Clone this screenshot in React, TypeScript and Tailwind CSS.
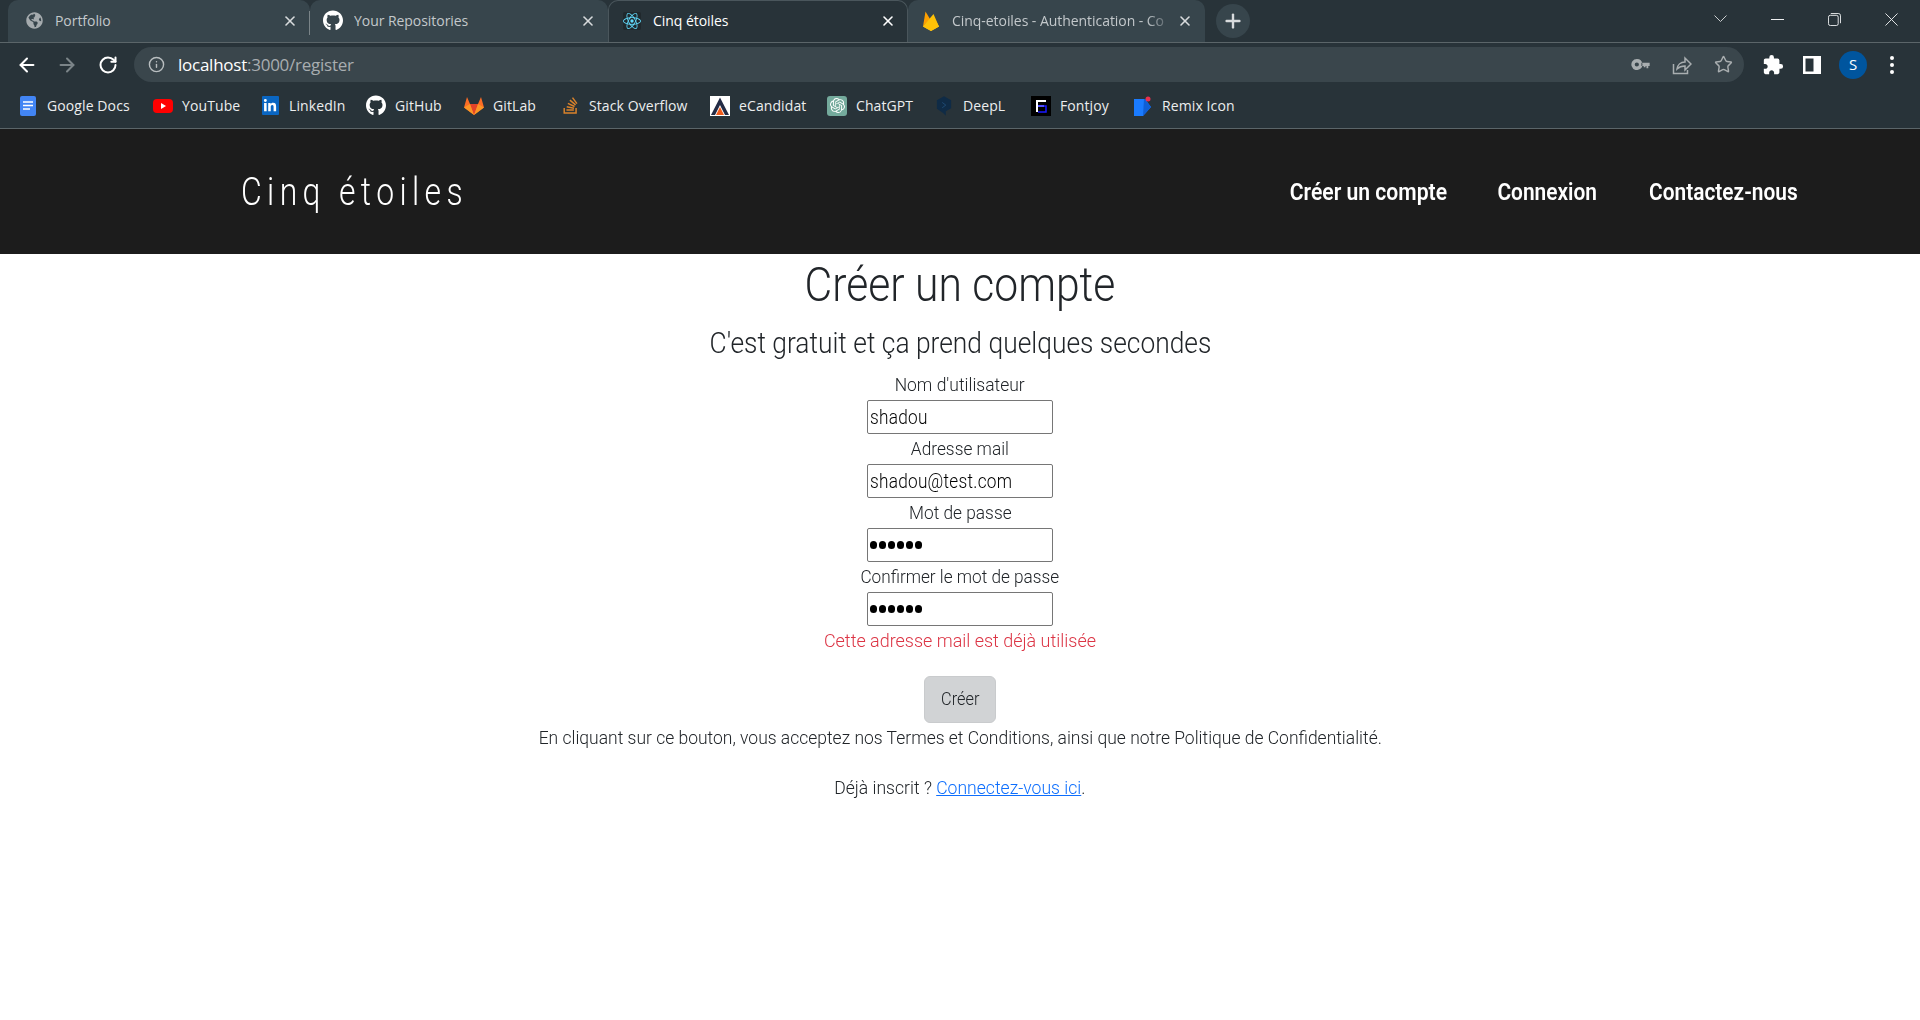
import React from "react";
import { ArrowLeft, ArrowRight, RotateCw, Info, Star, Plus, X } from "lucide-react";
import { FaGithub, FaStackOverflow, FaLinkedinIn, FaGlobeAmericas } from "react-icons/fa";
import { MdExtension } from "react-icons/md";
import { SiReact, SiOpenai } from "react-icons/si";

const Tab = ({ icon, title, active, width, divider, pad, fade }: { icon: React.ReactNode; title: string; active?: boolean; width: string; divider?: boolean; pad: string; fade?: boolean }) => (
  <div className={`${width} ${pad} relative h-[42px] shrink-0 flex items-center pb-[2px] pr-[11px] rounded-t-[10px] border-x border-t ${active ? "bg-[#283339] border-[#4a565c]" : "bg-[#37454c] border-transparent"}`}>
    <span className="w-[20px] h-[20px] shrink-0 flex items-center justify-center">{icon}</span>
    <span className={`ml-[11px] flex-1 overflow-hidden whitespace-nowrap text-[14px] tracking-[-0.05px] ${fade ? "[mask-image:linear-gradient(to_right,black_88%,transparent)]" : ""} ${active ? "text-white" : "text-[#c3c8cb]"}`}>{title}</span>
    <X size={16} strokeWidth={2.4} className={`shrink-0 ml-1 ${active ? "text-white" : "text-[#d8dbdd]"}`} />
    {divider && <span className="absolute right-[-1px] top-[10px] h-[24px] w-px bg-[#7a8488]" />}
  </div>
);

const Bookmark = ({ icon, label, width }: { icon: React.ReactNode; label: string; width: string }) => (
  <div className={`${width} shrink-0 flex items-center`}>
    <span className="w-[20px] h-[20px] flex items-center justify-center shrink-0">{icon}</span>
    <span className="ml-[9px] text-[14px] tracking-[0.1px] text-[#eceeef] whitespace-nowrap">{label}</span>
  </div>
);

const Narrow = ({ children, className, width }: { children: React.ReactNode; className: string; width: string }) => (
  <div className={`${width} flex justify-center`}>
    <span className={`inline-block shrink-0 whitespace-nowrap ${className}`}>{children}</span>
  </div>
);

const Field = ({ label, labelScale, value, password }: { label: string; labelScale: string; value: string; password?: boolean }) => (
  <div className="flex flex-col items-center">
    <div className="h-[30px] flex items-center">
      <span className={`font-['Roboto'] font-light text-[19px] text-[#212529] whitespace-nowrap ${labelScale}`}>{label}</span>
    </div>
    <div className="w-[186px] h-[34px] border border-[#767676] rounded-[2px] bg-white flex items-center pl-[2px] overflow-hidden">
      {password ? (
        <span className="flex gap-[1.6px]">
          {[0, 1, 2, 3, 4, 5].map((i) => (
            <span key={i} className="w-[7.4px] h-[8px] rounded-full bg-black" />
          ))}
        </span>
      ) : (
        <span className="font-['Roboto'] font-light text-[20px] tracking-[0.3px] text-black whitespace-nowrap origin-left scale-x-[0.86]">{value}</span>
      )}
    </div>
  </div>
);

export default function App() {
  return (
    <div className="w-[1920px] h-[1020px] overflow-hidden bg-white flex flex-col font-['Open_Sans',sans-serif]">
      {/* Tab strip */}
      <div className="h-[42px] bg-[#283339] flex items-start pl-[8px] relative shrink-0">
        <Tab pad="pl-[15px]" width="w-[302px]" divider title="Portfolio" icon={<FaGlobeAmericas size={17} className="text-[#a5abae]" />} />
        <Tab pad="pl-[12px]" width="w-[298px]" title="Your Repositories" icon={<FaGithub size={21} className="text-white" />} />
        <Tab pad="pl-[13px]" active width="w-[300px]" title="Cinq étoiles" icon={
          <span className="w-[18px] h-[18px] bg-[#20282c] flex items-center justify-center rounded-[2px]"><SiReact size={18} className="text-[#61dafb]" /></span>
        } />
        <Tab pad="pl-[12px]" fade width="w-[297px]" title="Cinq-etoiles - Authentication - Co" icon={
          <svg viewBox="0 0 16 20" width="16" height="20"><path d="M0 15.500 2.500 .5 7 8z" fill="#ffa000" /><path d="M0 15.500 7 8l3-3 6 10.500-8 4.500z" fill="#ffca28" /><path d="M0 15.500 10.500 3 16 15.500 8 20z" fill="#ffc107" /></svg>
        } />
        <div className="ml-[11px] mt-[4px] w-[34px] h-[34px] rounded-full bg-[#37454c] flex items-center justify-center">
          <Plus size={22} strokeWidth={2.6} className="text-[#d8dbdd]" />
        </div>
        <div className="ml-auto flex items-center h-[38px] pr-[22px] gap-[44px] text-[#eef0f1]">
          <svg viewBox="0 0 13 8" width="13" height="8" fill="none" stroke="#c9cdcf"><path d="M.5.5l6 6 6-6" /></svg>
          <svg viewBox="0 0 13 13" width="13" height="13" fill="none" stroke="currentColor"><path d="M0 6.500h13" /></svg>
          <svg viewBox="0 0 14 14" width="13" height="13" fill="none" stroke="currentColor"><rect x="0.5" y="2.500" width="10.500" height="11" rx="2" /><path d="M3 .5h8a2.500 2.500 0 0 1 2.500 2.500v8" /></svg>
          <svg viewBox="0 0 14 14" width="13" height="13" fill="none" stroke="currentColor"><path d="M.5.5l13 13M13.500.5l-13 13" /></svg>
        </div>
      </div>
      <div className="h-px bg-[#5b6569] shrink-0" />
      {/* Toolbar */}
      <div className="h-[43px] bg-[#283339] flex items-center pl-[16px] shrink-0">
        <ArrowLeft size={22} strokeWidth={2.2} className="text-white" />
        <ArrowRight size={22} strokeWidth={2.2} className="ml-[18px] text-[#7b8488]" />
        <RotateCw size={20} strokeWidth={2.4} className="ml-[20px] text-white" />
        <div className="ml-[16px] w-[1610px] h-[35px] rounded-full bg-[#3a464c] flex items-center pl-[14px] pr-[11px]">
          <Info size={17} strokeWidth={2} className="text-[#b9bec0]" />
          <span className="ml-[13px] text-[17px] tracking-[-0.25px] text-white">localhost<span className="text-[#a8adb0]">:3000/register</span></span>
          <div className="ml-auto flex items-center gap-[22px] text-[#a9aeb0]">
            <svg viewBox="0 0 20 12" width="19" height="11" fill="currentColor"><path d="M6 0a6 6 0 1 1-5.600 8 6 6 0 0 1 5.600-8zm0 3.700a2.300 2.300 0 1 0 0 4.600 2.300 2.300 0 0 0 0-4.600zM11 4h9v3.500h-1.500V10h-2V7.500h-1V9h-2V7.500H11z" fillRule="evenodd" /></svg>
            <svg viewBox="0 0 20 20" width="20" height="20" fill="none" stroke="currentColor" strokeWidth="1.500"><path d="M1.500 9v9.500h14V15" /><path d="M5 14c.5-4 3.500-7 8-7V3l6 6-6 6v-4c-3.500 0-6 1-8 3z" /></svg>
            <Star size={19} strokeWidth={1.800} />
          </div>
        </div>
        <MdExtension size={22} className="ml-[18px] text-white" />
        <svg viewBox="0 0 18 18" width="18" height="18" className="ml-[19px]"><path fill="#fff" fillRule="evenodd" d="M0 0h18v18H0zM2.500 2.500v13h8v-13z" /></svg>
        <div className="ml-[18px] w-[28px] h-[28px] rounded-full bg-[#00559e] flex items-center justify-center text-[15px] text-white">S</div>
        <div className="ml-[23px] flex flex-col gap-[3px]">
          <span className="w-[4px] h-[4px] rounded-full bg-white" />
          <span className="w-[4px] h-[4px] rounded-full bg-white" />
          <span className="w-[4px] h-[4px] rounded-full bg-white" />
        </div>
      </div>
      {/* Bookmarks */}
      <div className="h-[42px] bg-[#283339] flex items-center pl-[18px] pb-[3px] shrink-0">
        <Bookmark width="w-[135px]" label="Google Docs" icon={
          <svg viewBox="0 0 16 20" width="16" height="20"><rect width="16" height="20" rx="2" fill="#4285f4" /><path d="M3 6h10M3 9.500h10M3 13h7" stroke="#fff" strokeWidth="1.600" /></svg>
        } />
        <Bookmark width="w-[107px]" label="YouTube" icon={
          <svg viewBox="0 0 20 14" width="20" height="14"><rect width="20" height="14" rx="4" fill="#f00" /><path d="M8 4l5 3-5 3z" fill="#fff" /></svg>
        } />
        <Bookmark width="w-[106px]" label="LinkedIn" icon={
          <span className="w-[17px] h-[19px] bg-[#0a66c2] flex items-center justify-center rounded-[1px]"><FaLinkedinIn size={14} className="text-white" /></span>
        } />
        <Bookmark width="w-[98px]" label="GitHub" icon={<FaGithub size={21} className="text-white" />} />
        <Bookmark width="w-[96px]" label="GitLab" icon={
          <svg viewBox="0 0 20 20" width="20" height="20"><path d="M10 19 0 11.500 3 1l3 7h8l3-7 3 10.500z" fill="#fc6d26" /><path d="M10 19 6 8h8z" fill="#e24329" /><path d="M10 19 0 11.500 6 8zM10 19l10-7.500L14 8z" fill="#fca326" opacity=".75" /></svg>
        } />
        <Bookmark width="w-[150px]" label="Stack Overflow" icon={<FaStackOverflow size={19} className="text-[#d9822b]" />} />
        <Bookmark width="w-[117px]" label="eCandidat" icon={
          <svg viewBox="0 0 20 20" width="20" height="20"><rect width="20" height="20" fill="#fff" /><path d="M10 1.500 1 19h4l5-10 5 10h4z" fill="#232b45" /><path d="M10 11l-4 8h8z" fill="#ef5a1a" /></svg>
        } />
        <Bookmark width="w-[107px]" label="ChatGPT" icon={
          <span className="w-[20px] h-[20px] rounded-[3px] bg-[#74aa9c] flex items-center justify-center"><SiOpenai size={15} className="text-white" /></span>
        } />
        <Bookmark width="w-[97px]" label="DeepL" icon={
          <svg viewBox="0 0 18 22" width="16" height="20"><path d="M9 0l8 4.500v9L11 17v5l-3-3-7-5V4.500z" fill="#0f2b46" /><path d="M7 7l4 3-4 3" stroke="#1e4d78" fill="none" /></svg>
        } />
        <Bookmark width="w-[102px]" label="Fontjoy" icon={
          <svg viewBox="0 0 20 20" width="20" height="20"><rect width="20" height="20" fill="#000" /><path d="M5 4h10v2H7v3h6v2H7v5H5z" fill="#fff" /><path d="M7 10h8v6H7" fill="none" stroke="#1a1aff" strokeWidth="1.500" /></svg>
        } />
        <Bookmark width="w-[104px]" label="Remix Icon" icon={
          <svg viewBox="0 0 20 20" width="20" height="20"><path d="M1 3h11l6 8-8 9H1z" fill="#1a7bff" /><path d="M11 3h1l6 8-8 9z" fill="#0f5fd6" /><circle cx="15" cy="3" r="2.500" fill="#e8304f" /></svg>
        } />
      </div>
      <div className="h-px bg-[#5b6569] shrink-0" />
      {/* Site header */}
      <header className="h-[125px] bg-[#1c1c1c] flex items-center pl-[241px] pr-[122px] shrink-0">
        <span className="font-['Roboto'] font-light text-[38px] text-white whitespace-nowrap tracking-[6.4px] origin-left scale-x-[0.84] mt-[2px]">Cinq étoiles</span>
        <nav className="ml-auto flex items-center text-white mt-[1px]">
          <Narrow width="w-[157px]" className="font-['Roboto'] font-semibold text-[24px] scale-x-[0.88]">Créer un compte</Narrow>
          <Narrow width="w-[98px] ml-[51px]" className="font-['Roboto'] font-semibold text-[24px] scale-x-[0.87]">Connexion</Narrow>
          <Narrow width="w-[150px] ml-[52px]" className="font-['Roboto'] font-semibold text-[24px] scale-x-[0.87]">Contactez-nous</Narrow>
        </nav>
      </header>
      {/* Main */}
      <main className="flex flex-col items-center text-[#212529] pt-[1px]">
        <h1 className="h-[60px] flex items-center font-['Roboto'] font-light text-[48px] whitespace-nowrap scale-x-[0.888]">Créer un compte</h1>
        <h2 className="h-[50px] mt-[2px] flex items-center font-['Roboto'] font-light text-[30px] whitespace-nowrap scale-x-[0.879]">C'est gratuit et ça prend quelques secondes</h2>
        <div className="mt-[3px] flex flex-col items-center">
          <Field label="Nom d'utilisateur" labelScale="scale-x-[0.92]" value="shadou" />
          <Field label="Adresse mail" labelScale="scale-x-[0.91]" value="shadou@test.com" />
          <Field label="Mot de passe" labelScale="scale-x-[0.91]" value="" password />
          <Field label="Confirmer le mot de passe" labelScale="scale-x-[0.905]" value="" password />
        </div>
        <div className="h-[30px] flex items-center font-['Roboto'] font-light text-[19px] text-[#dc3545] whitespace-nowrap scale-x-[0.945]">Cette adresse mail est déjà utilisée</div>
        <button className="mt-[20px] w-[72px] h-[47px] rounded-[6px] bg-[#d1d3d5] border border-[#c9cbcd] flex items-center justify-center">
          <span className="font-['Roboto'] font-light text-[19px] text-[#212529] scale-x-[0.86]">Créer</span>
        </button>
        <div className="h-[30px] flex items-center font-['Roboto'] font-light text-[19px] whitespace-nowrap scale-x-[0.92]">En cliquant sur ce bouton, vous acceptez nos Termes et Conditions, ainsi que notre Politique de Confidentialité.</div>
        <div className="mt-[20px] h-[30px] flex items-center font-['Roboto'] font-light text-[19px] whitespace-nowrap scale-x-[0.925]">
          <span>Déjà inscrit ?&nbsp;</span><span className="text-[#0d6efd] underline">Connectez-vous ici</span><span>.</span>
        </div>
      </main>
    </div>
  );
}
